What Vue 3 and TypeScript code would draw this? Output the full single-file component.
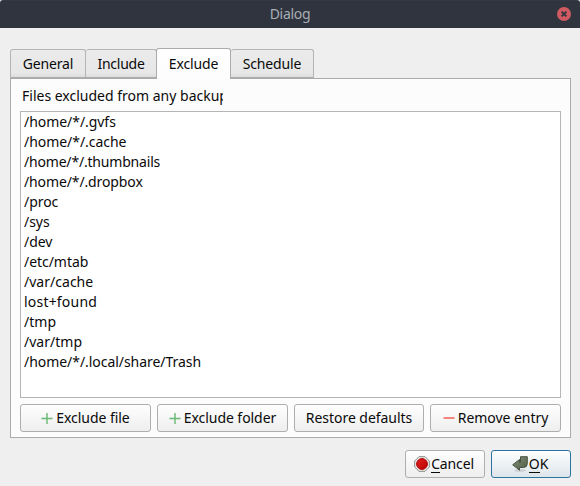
<script setup lang="ts">
import { ref } from 'vue'

interface Tab { name: string; cls: string }

const tabs: Tab[] = [
  { name: 'General', cls: 'general' },
  { name: 'Include', cls: 'include' },
  { name: 'Exclude', cls: 'exclude' },
  { name: 'Schedule', cls: 'schedule' },
]
const active = ref('Exclude')
const entries: string[] = [
  '/home/*/.gvfs', '/home/*/.cache', '/home/*/.thumbnails', '/home/*/.dropbox',
  '/proc', '/sys', '/dev', '/etc/mtab', '/var/cache', 'lost+found', '/tmp',
  '/var/tmp', '/home/*/.local/share/Trash',
]
</script>

<template>
  <div class="dialog">
    <header class="titlebar">
      <span class="title">Dialog</span>
      <svg class="close" width="14" height="14" viewBox="0 0 14 14">
        <circle cx="7" cy="7" r="7" fill="#cf5a62" />
        <path d="M4.6 4.6 9.4 9.4M9.4 4.6 4.6 9.4" stroke="#2f343f" stroke-width="1.8" />
      </svg>
    </header>
    <nav class="tabs">
      <button v-for="t in tabs" :key="t.name" class="tab" :class="[t.cls, { active: t.name === active }]" @click="active = t.name"><span>{{ t.name }}</span></button>
    </nav>
    <section class="panel">
      <div class="caption">Files excluded from any backup</div>
      <ul class="list">
        <li v-for="e in entries" :key="e">{{ e }}</li>
      </ul>
      <div class="actions">
        <button class="btn">
          <svg width="12" height="12" viewBox="0 0 12 12"><path d="M0.5 6.5H11.5M6 1V12" stroke="#69b974" stroke-width="1.4" /></svg>
          <span>Exclude file</span>
        </button>
        <button class="btn">
          <svg width="12" height="12" viewBox="0 0 12 12"><path d="M0.5 6.5H11.5M6 1V12" stroke="#69b974" stroke-width="1.4" /></svg>
          <span>Exclude folder</span>
        </button>
        <button class="btn"><span>Restore defaults</span></button>
        <button class="btn">
          <svg width="12" height="12" viewBox="0 0 12 12"><path d="M0.5 6H11.5" stroke="#f47f78" stroke-width="1.9" /></svg>
          <span>Remove entry</span>
        </button>
      </div>
    </section>
    <footer class="footer">
      <button class="btn cancel">
        <svg width="16" height="16" viewBox="0 0 16 16">
          <defs><linearGradient id="stop" x1="0" y1="0" x2="1" y2="1"><stop offset="0" stop-color="#e52222" /><stop offset="1" stop-color="#b80000" /></linearGradient></defs>
          <path d="M5 .7H11L15.3 5V11L11 15.3H5L.7 11V5Z" fill="#eeeeec" stroke="#888a85" />
          <circle cx="8" cy="8" r="5.4" fill="url(#stop)" stroke="#a90000" />
        </svg>
        <span><i>C</i>ancel</span>
      </button>
      <button class="btn ok">
        <svg width="16" height="16" viewBox="0 0 16 16">
          <defs><linearGradient id="ret" x1="0" y1="0" x2="1" y2="1"><stop offset="0" stop-color="#83917a" /><stop offset="1" stop-color="#4e5c46" /></linearGradient></defs>
          <ellipse cx="8" cy="14.4" rx="6" ry="1.4" fill="#000" opacity=".12" />
          <path d="M8.5.7H15.3V7.5Q15.3 11.5 11.5 11.5H7.5V14.2L.7 8.8L7.5 3.5V6.5H8.5Z" fill="url(#ret)" stroke="#48533f" stroke-width="1" />
        </svg>
        <span><i>O</i>K</span>
      </button>
    </footer>
  </div>
</template>

<style>
body { margin: 0; background: #efefef; }
</style>

<style scoped>
.dialog { box-sizing: border-box; width: 580px; height: 486px; background: #efefef; font-family: "Noto Sans", sans-serif; font-size: 14px; color: #0a0a0a; display: flex; flex-direction: column; overflow: hidden; }
button { font: inherit; color: inherit; padding: 0; margin: 0; box-sizing: border-box; }
.titlebar { height: 28px; flex: none; background: linear-gradient(#353945 0, #353945 1px, #2f343f 1px); display: grid; grid-template-columns: 1fr auto 1fr; align-items: center; color: #a9adb5; border-radius: 3px 3px 0 0; }
.title { grid-column: 2; line-height: 28px; letter-spacing: -0.3px; }
.close { grid-column: 3; justify-self: end; margin-right: 9px; }
.tabs { display: flex; align-items: flex-end; height: 30px; margin: 20px 0 0 10px; flex: none; position: relative; z-index: 1; }
.tab { height: 29px; border: 1px solid #b4b4b4; border-left-width: 0; border-bottom-color: #ababab; border-radius: 3px 3px 0 0; background: linear-gradient(#ebebeb, #e7e7e7 85%, #dedede); line-height: 27px; white-space: nowrap; letter-spacing: -0.15px; }
.general { width: 76px; border-left-width: 1px; }
.include { width: 71px; letter-spacing: -0.25px; }
.exclude { width: 74px; }
.schedule { width: 83px; }
.tab.active { height: 31px; margin-bottom: -1px; border-color: #ababab; border-left-width: 1px; border-bottom: 0; margin-left: -1px; width: 75px; background: linear-gradient(#fff, #fcfcfc); line-height: 27px; padding-bottom: 2px; }
.tab span { display: block; }
.panel { box-sizing: border-box; width: 561px; height: 360px; margin: 0 0 0 10px; flex: none; background: #fcfcfc; border: 1px solid #ababab; padding: 6px 9px 5px; display: flex; flex-direction: column; }
.caption { width: 201px; height: 22px; line-height: 22px; margin: 0 0 4px 2px; overflow: hidden; white-space: nowrap; }
.list { box-sizing: border-box; height: 287px; margin: 0 0 6px; padding: 0 3px; list-style: none; background: #fff; border: 1px solid #b5b5b5; }
.list li { height: 20px; line-height: 20px; white-space: nowrap; letter-spacing: -0.05px; }
.list li:nth-child(3) { letter-spacing: -0.19px; }
.list li:nth-child(4) { letter-spacing: -0.12px; }
.list li:nth-child(10) { letter-spacing: 0.2px; }
.list li:nth-child(9), .list li:nth-child(11), .list li:nth-child(12) { letter-spacing: 0.02px; }
.actions { display: grid; grid-template-columns: 131px 131px 130px 131px; column-gap: 6px; }
.btn { height: 28px; border: 1px solid #aeaeae; border-radius: 3px; background: linear-gradient(#fefefe, #eeeeee); display: flex; align-items: center; justify-content: center; gap: 3px; white-space: nowrap; line-height: 26px; letter-spacing: -0.05px; }
.footer { display: flex; justify-content: flex-end; gap: 6px; margin: 12px 9px 0 0; }
.footer .btn { width: 80px; gap: 1px; padding-right: 2px; }
.footer .cancel { letter-spacing: -0.15px; }
.btn.ok { border-color: #2b73a0; background: linear-gradient(#fdfefe, #dde5ea); }
i { font-style: normal; box-shadow: inset 0 -1px #0a0a0a; display: inline-block; line-height: 18px; }
</style>
